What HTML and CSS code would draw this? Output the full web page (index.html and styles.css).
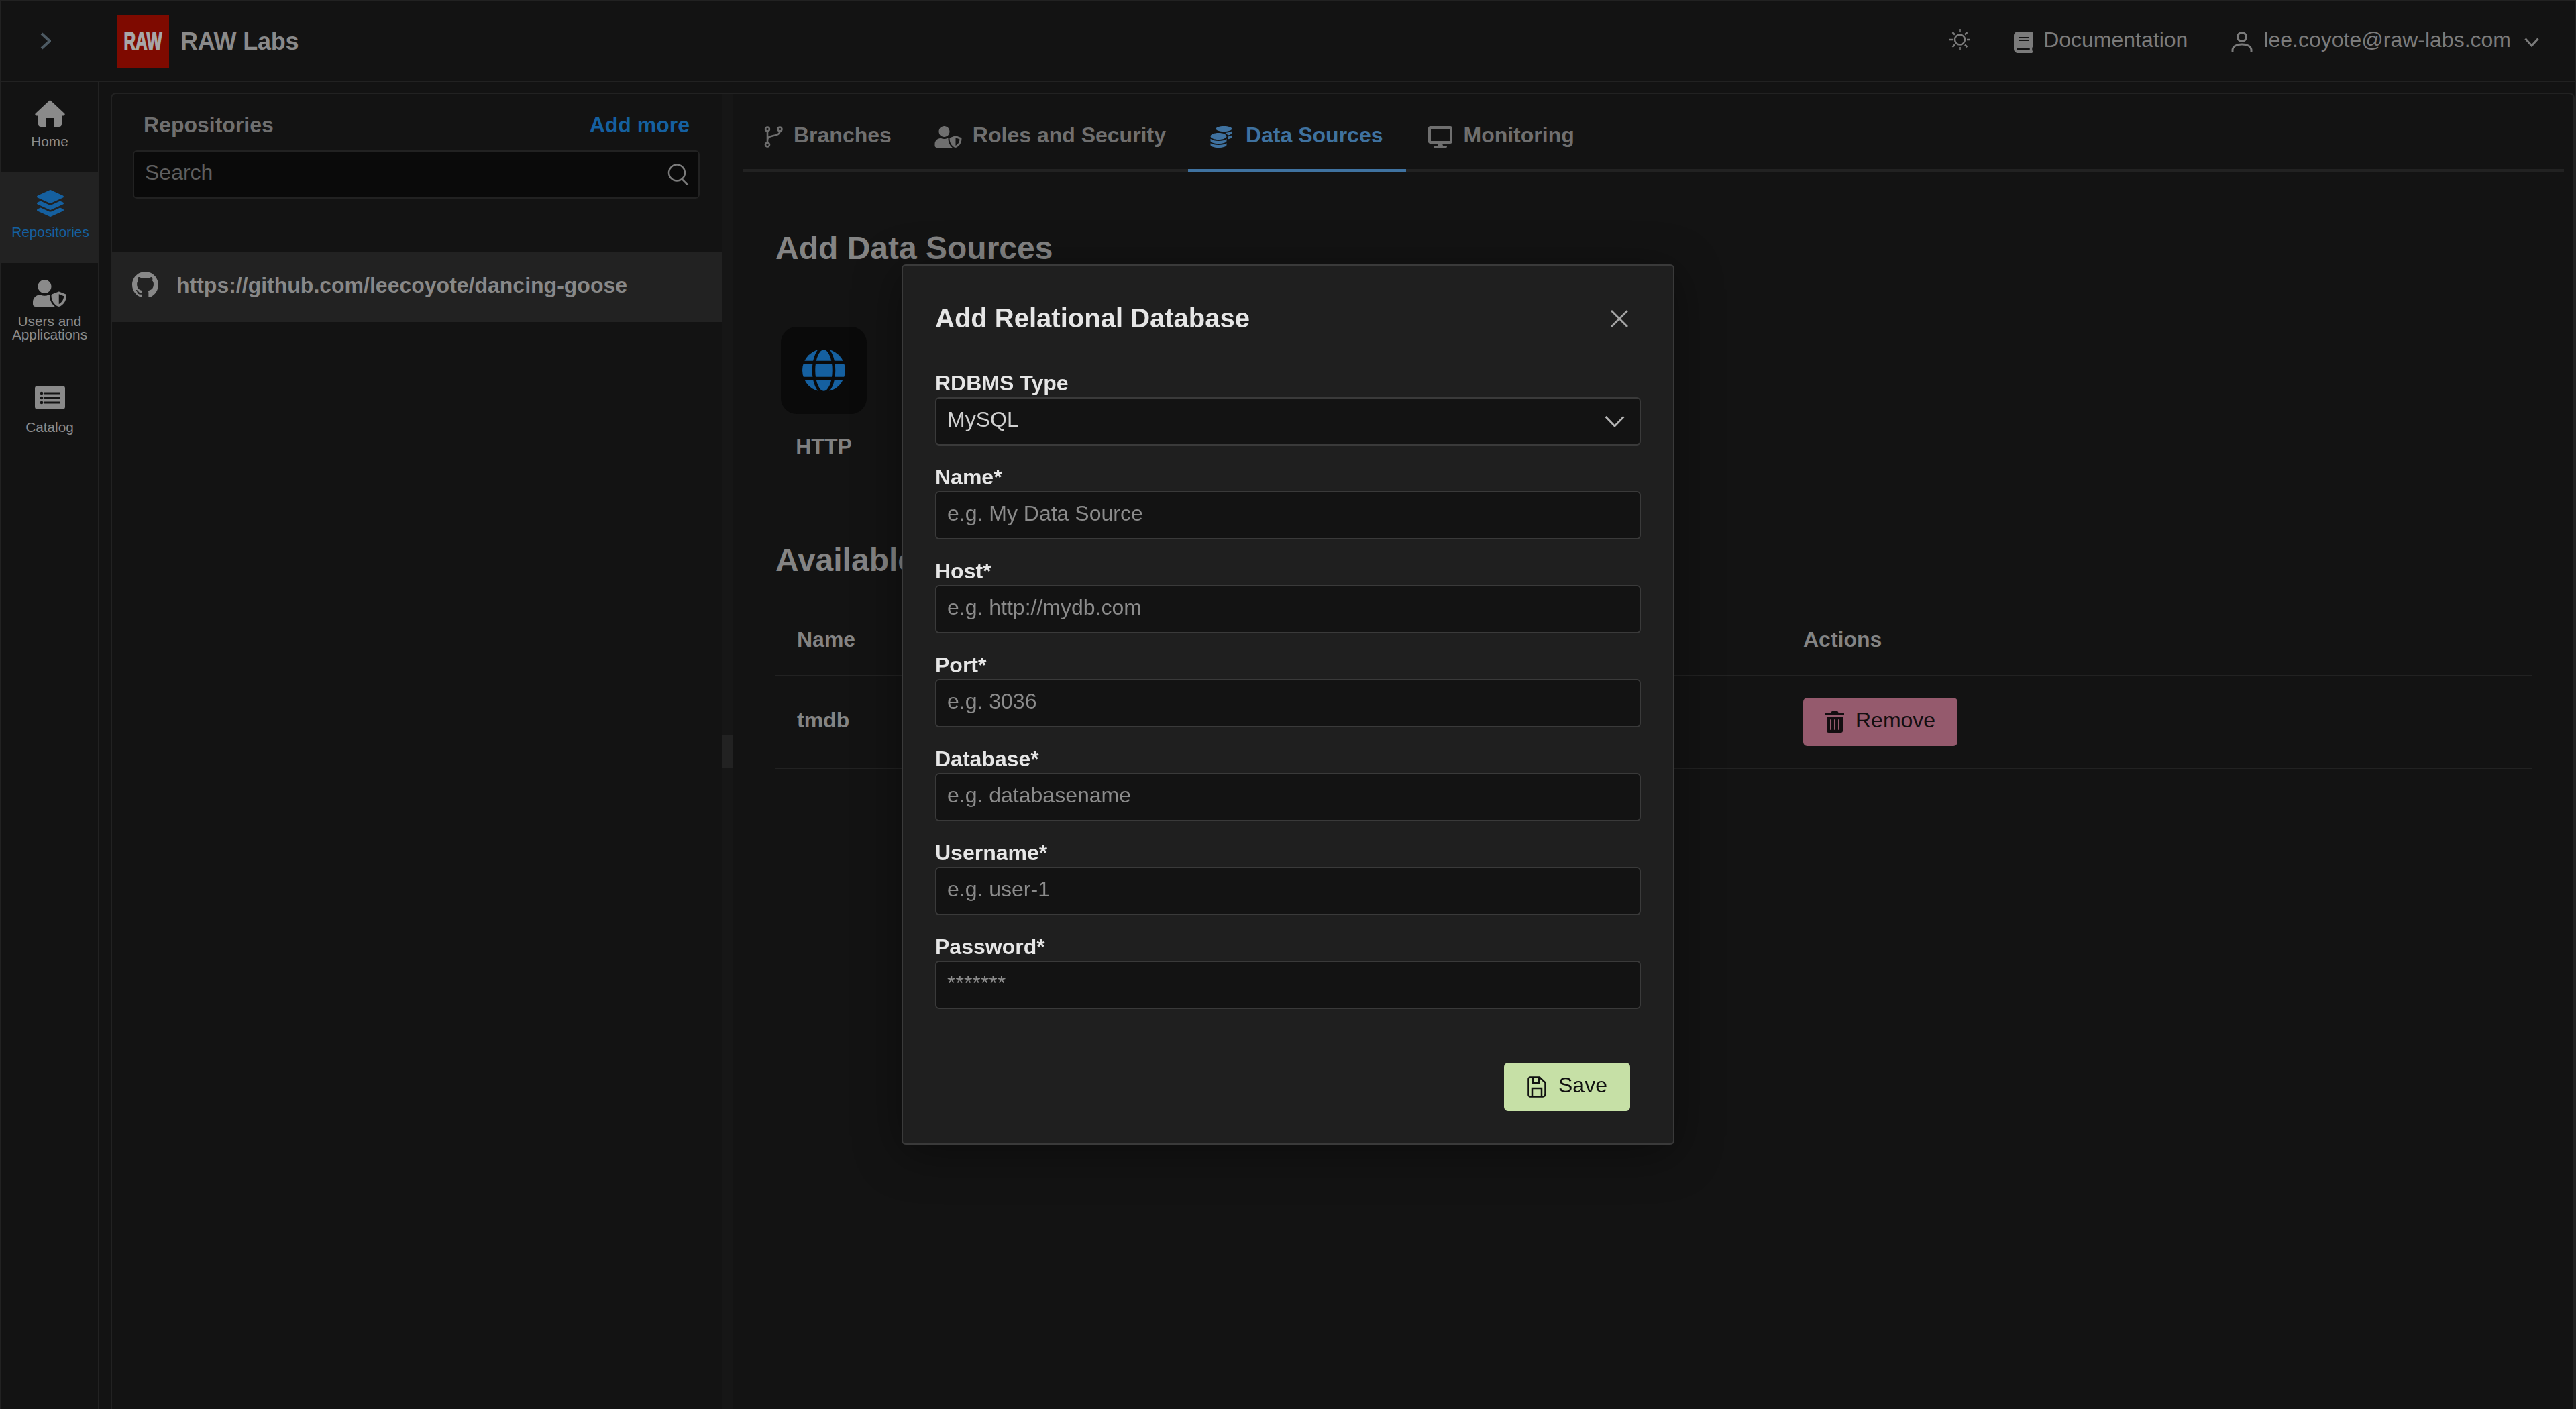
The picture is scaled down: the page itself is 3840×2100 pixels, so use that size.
FILE: index.html
```html
<!DOCTYPE html>
<html lang="en">
<head>
<meta charset="utf-8">
<title>RAW Labs</title>
<link rel="stylesheet" href="styles.css">
</head>
<body>
<svg class="defs" width="0" height="0" aria-hidden="true">
  <symbol id="i-usershield" viewBox="0 0 640 512">
    <path fill="currentColor" d="M622.300 271.100l-115.200-45c-4.100-1.600-12.600-3.700-22.200 0l-115.200 45c-10.700 4.200-17.700 14-17.700 24.900 0 111.600 68.700 188.800 132.900 213.900 9.600 3.700 18 1.600 22.200 0C558.400 489.900 640 420.500 640 296c0-10.900-7-20.700-17.700-24.900zM496 462.400V273.300l95.500 37.300c-5.600 87.100-60.900 135.400-95.500 151.800zM224 256c70.700 0 128-57.300 128-128S294.700 0 224 0 96 57.300 96 128s57.300 128 128 128zm96 40c0-2.500.8-4.800 1.100-7.200-2.500-.1-4.900-.8-7.500-.8h-16.700c-22.200 10.200-46.900 16-72.900 16s-50.600-5.800-72.900-16h-16.700C60.200 288 0 348.200 0 422.400V464c0 26.500 21.500 48 48 48h352c6.800 0 13.300-1.500 19.100-4-54-42.900-99.100-116.700-99.100-212z"/>
  </symbol>
</svg>
<div class="app">
  <header class="topbar">
    <div class="toggle">
      <svg class="chev-right" viewBox="0 0 16 26"><path d="M2 2l12 11L2 24"/></svg>
    </div>
    <div class="logo"><span class="logo-text">RAW</span></div>
    <div class="brand">RAW Labs</div>
    <div class="top-actions">
      <svg class="i-sun" viewBox="0 0 33 32"><circle cx="16.500" cy="16" r="7.500"/><path d="M16.500 0v5M16.500 27v5M1 16h5M27 16h5M5.500 5l3.500 3.500M24 23.500l3.500 3.500M27.500 5L24 8.500M9 23.500L5.500 27"/></svg>
      <svg class="i-book" viewBox="0 0 448 512"><path d="M448 360V24c0-13.300-10.700-24-24-24H96C43 0 0 43 0 96v320c0 53 43 96 96 96h328c13.300 0 24-10.700 24-24v-16c0-7.500-3.500-14.300-8.900-18.700-4.200-15.400-4.200-59.300 0-74.700 5.400-4.300 8.900-11.100 8.900-18.600zM128 134c0-3.300 2.700-6 6-6h212c3.300 0 6 2.700 6 6v20c0 3.300-2.700 6-6 6H134c-3.300 0-6-2.700-6-6v-20zm0 64c0-3.300 2.700-6 6-6h212c3.300 0 6 2.700 6 6v20c0 3.300-2.700 6-6 6H134c-3.300 0-6-2.700-6-6v-20zm253.400 250H96c-17.700 0-32-14.300-32-32 0-17.600 14.400-32 32-32h285.400c-1.900 17.100-1.900 46.900 0 64z"/></svg>
      <span class="top-link">Documentation</span>
      <svg class="i-user" viewBox="0 0 32 31"><circle cx="16" cy="8" r="6.500"/><path d="M2 31v-3c0-6 6-9 14-9s14 3 14 9v3"/></svg>
      <span class="top-link email">lee.coyote@raw-labs.com</span>
      <svg class="i-chev-down" viewBox="0 0 22 14"><path d="M1.500 1.500L11 12l9.500-10.500"/></svg>
    </div>
  </header>

  <div class="workspace">
    <nav class="sidebar">
      <a class="nav-item">
        <svg class="nav-icon i-home" viewBox="0 0 45 40"><path d="M22.500 0L44 20c1.500 1.500.5 3.500-1.500 3.500H40V36c0 2.500-1.500 4-4 4h-7V27H17v13H9c-2.500 0-4-1.500-4-4V23.500H2.500C.5 23.500-.5 21.500 1 20Z"/></svg>
        <span>Home</span>
      </a>
      <a class="nav-item active">
        <svg class="nav-icon i-layers" viewBox="0 0 512 512"><path d="M12.410 148.020l232.940 105.670c6.800 3.090 14.490 3.090 21.290 0l232.940-105.670c16.550-7.510 16.550-32.520 0-40.030L266.650 2.310a25.607 25.607 0 0 0-21.290 0L12.410 107.980c-16.550 7.510-16.550 32.530 0 40.040zm487.180 88.280l-58.090-26.330-161.640 73.270c-7.560 3.430-15.590 5.170-23.860 5.170s-16.290-1.740-23.860-5.170L70.510 209.970l-58.100 26.330c-16.550 7.500-16.550 32.500 0 40l232.940 105.590c6.800 3.080 14.490 3.080 21.290 0L499.590 276.300c16.550-7.500 16.550-32.500 0-40zm0 127.800l-57.870-26.230-161.860 73.370c-7.560 3.430-15.590 5.170-23.860 5.170s-16.290-1.740-23.860-5.170L70.290 337.870 12.410 364.100c-16.550 7.500-16.550 32.500 0 40l232.940 105.590c6.800 3.080 14.490 3.080 21.290 0L499.590 404.100c16.550-7.500 16.550-32.500 0-40z"/></svg>
        <span>Repositories</span>
      </a>
      <a class="nav-item">
        <svg class="nav-icon i-wide"><use href="#i-usershield"/></svg>
        <span>Users and<br>Applications</span>
      </a>
      <a class="nav-item">
        <svg class="nav-icon i-catalog" viewBox="0 0 45 35"><rect width="45" height="35" rx="4" fill="currentColor"/><path fill="#131313" d="M14 9.500h23v3H14zM14 16.500h23v3H14zM14 23.500h23v3H14z"/><circle cx="10" cy="11" r="2.300" fill="#131313"/><circle cx="10" cy="18" r="2.300" fill="#131313"/><circle cx="10" cy="25" r="2.300" fill="#131313"/></svg>
        <span>Catalog</span>
      </a>
    </nav>

    <main class="panel">
      <section class="repos">
        <div class="repos-head">
          <span class="repos-title">Repositories</span>
          <span class="add-more">Add more</span>
        </div>
        <div class="search">
          <input class="search-input" type="text" placeholder="Search">
          <svg class="i-search" viewBox="0 0 32 32"><circle cx="14" cy="13.500" r="12"/><path d="M21.500 23l9 9"/></svg>
        </div>
        <div class="repo-row">
          <svg class="i-github" viewBox="0 0 16 16"><path d="M8 0C3.580 0 0 3.580 0 8c0 3.540 2.290 6.530 5.470 7.590.4.070.55-.17.55-.38 0-.19-.01-.82-.01-1.490-2.010.37-2.530-.49-2.690-.94-.09-.23-.48-.94-.82-1.130-.28-.15-.68-.52-.01-.53.63-.01 1.080.58 1.230.82.720 1.210 1.870.87 2.330.66.070-.52.280-.87.510-1.070-1.780-.2-3.640-.89-3.640-3.950 0-.87.310-1.590.820-2.150-.08-.2-.36-1.020.08-2.120 0 0 .67-.21 2.200.82.640-.18 1.320-.27 2-.27.680 0 1.360.09 2 .27 1.530-1.040 2.200-.82 2.200-.82.440 1.100.160 1.920.080 2.120.510.560.820 1.270.820 2.150 0 3.070-1.870 3.750-3.650 3.950.290.250.540.730.540 1.480 0 1.070-.01 1.930-.01 2.200 0 .21.150.46.550.38A8.013 8.013 0 0 0 16 8c0-4.420-3.580-8-8-8Z"/></svg>
          <span>https://github.com/leecoyote/dancing-goose</span>
        </div>
      </section>

      <div class="splitter"><div class="handle"></div></div>

      <section class="detail">
        <div class="tabs">
          <div class="tab">
            <svg class="tab-icon i-branch" viewBox="0 0 28 32"><circle cx="5" cy="4.500" r="3"/><circle cx="23.500" cy="4.500" r="3"/><circle cx="5" cy="27.500" r="3"/><path d="M5 7.500v17M23.500 7.500c0 9-18.500 4-18.500 13"/></svg>
            <span class="tab-label">Branches</span>
          </div>
          <div class="tab">
            <svg class="tab-icon i-roles"><use href="#i-usershield"/></svg>
            <span class="tab-label">Roles and Security</span>
          </div>
          <div class="tab selected">
            <svg class="tab-icon i-coins" viewBox="0 0 512 512"><path d="M0 405.300V448c0 35.300 86 64 192 64s192-28.700 192-64v-42.700C342.700 434.400 267.200 448 192 448S41.300 434.400 0 405.300zM320 128c106 0 192-28.700 192-64S426 0 320 0 128 28.700 128 64s86 64 192 64zM0 300.400V352c0 35.300 86 64 192 64s192-28.700 192-64v-51.600c-41.300 34-116.900 51.600-192 51.600S41.300 334.400 0 300.400zm416 11c57.300-11.100 96-31.700 96-55.400v-42.700c-23.200 16.400-57.300 27.600-96 34.500v63.600zM192 160C86 160 0 195.800 0 240s86 80 192 80 192-35.800 192-80-86-80-192-80zm219.300 56.300c60-10.800 100.700-32 100.700-56.300v-42.700c-35.500 25.100-96.500 38.600-160.700 41.800 29.500 14.300 51.200 33.500 60 57.200z"/></svg>
            <span class="tab-label">Data Sources</span>
          </div>
          <div class="tab">
            <svg class="tab-icon i-monitor" viewBox="0 0 576 512"><path d="M528 0H48C21.500 0 0 21.500 0 48v320c0 26.500 21.500 48 48 48h192l-16 48h-72c-13.300 0-24 10.700-24 24s10.700 24 24 24h272c13.300 0 24-10.700 24-24s-10.700-24-24-24h-72l-16-48h192c26.500 0 48-21.500 48-48V48c0-26.500-21.500-48-48-48zm-16 352H64V64h448v288z"/></svg>
            <span class="tab-label">Monitoring</span>
          </div>
        </div>

        <div class="detail-body">
          <h2 class="section-title first">Add Data Sources</h2>
          <div class="source">
            <div class="source-card">
              <svg class="i-globe" viewBox="0 0 66 66"><circle cx="33" cy="33" r="32"/><ellipse class="cut" cx="33" cy="33" rx="15" ry="33"/><path class="cut" d="M0 21h66M0 45h66"/></svg>
            </div>
            <div class="source-name">HTTP</div>
          </div>
          <h2 class="section-title second">Available Data Sources</h2>
          <div class="table">
            <div class="t-row t-head">
              <span class="t-name">Name</span>
              <span class="t-actions">Actions</span>
            </div>
            <div class="t-row t-body">
              <span class="t-name strong">tmdb</span>
              <button class="btn btn-remove" type="button">
                <svg class="i-trash" viewBox="0 0 448 512"><path d="M32 464a48 48 0 0 0 48 48h288a48 48 0 0 0 48-48V128H32zm272-256a16 16 0 0 1 32 0v224a16 16 0 0 1-32 0zm-96 0a16 16 0 0 1 32 0v224a16 16 0 0 1-32 0zm-96 0a16 16 0 0 1 32 0v224a16 16 0 0 1-32 0zM432 32H312l-9.400-18.700A24 24 0 0 0 281.100 0H166.800a23.720 23.720 0 0 0-21.400 13.300L136 32H16A16 16 0 0 0 0 48v32a16 16 0 0 0 16 16h416a16 16 0 0 0 16-16V48a16 16 0 0 0-16-16z"/></svg>
                <span class="btn-label">Remove</span>
              </button>
            </div>
          </div>
        </div>
      </section>
    </main>
  </div>
</div>

<div class="overlay">
  <form class="modal">
    <div class="modal-head">
      <h3 class="modal-title">Add Relational Database</h3>
      <svg class="i-close" viewBox="0 0 26 26"><path d="M1 1l24 24M25 1L1 25"/></svg>
    </div>
    <div class="field">
      <label class="field-label">RDBMS Type</label>
      <div class="select">
        <span class="select-value">MySQL</span>
        <svg class="i-select" viewBox="0 0 30 18"><path d="M1.500 2L15 16 28.500 2"/></svg>
      </div>
    </div>
    <div class="field">
      <label class="field-label">Name*</label>
      <input class="input" type="text" placeholder="e.g. My Data Source">
    </div>
    <div class="field">
      <label class="field-label">Host*</label>
      <input class="input" type="text" placeholder="e.g. http://mydb.com">
    </div>
    <div class="field">
      <label class="field-label">Port*</label>
      <input class="input" type="text" placeholder="e.g. 3036">
    </div>
    <div class="field">
      <label class="field-label">Database*</label>
      <input class="input" type="text" placeholder="e.g. databasename">
    </div>
    <div class="field">
      <label class="field-label">Username*</label>
      <input class="input" type="text" placeholder="e.g. user-1">
    </div>
    <div class="field">
      <label class="field-label">Password*</label>
      <input class="input" type="text" placeholder="*******">
    </div>
    <div class="modal-foot">
      <button class="btn btn-save" type="button">
        <svg class="i-save" viewBox="0 0 28 32"><path d="M4 1.500h14l8.500 8V27a3.500 3.500 0 0 1-3.500 3.500H4A3 3 0 0 1 1.500 27V4A3 3 0 0 1 4 1.500Z"/><path d="M8 2v8h9V2M7 30V18h14v12"/></svg>
        <span class="btn-label">Save</span>
      </button>
    </div>
  </form>
</div>
</body>
</html>
```

FILE: styles.css
```css
* { box-sizing: border-box; }
html, body { margin: 0; height: 100%; }
body {
  background: #131313;
  color: #8a8a8a;
  font-family: "Liberation Sans", Arial, sans-serif;
  font-size: 32px;
  overflow: hidden;
}
.defs { position: absolute; }

.app {
  height: 100vh;
  display: flex;
  flex-direction: column;
  border: 2px solid #222;
  border-bottom: 0;
}

/* top bar */
.topbar {
  height: 120px;
  flex: none;
  display: flex;
  align-items: center;
  border-bottom: 2px solid #222;
}
.toggle { width: 172px; flex: none; padding-left: 58px; display: flex; }
.chev-right { width: 16px; height: 26px; fill: none; stroke: #4d5a63; stroke-width: 4; }
.logo {
  width: 78px;
  height: 78px;
  margin-top: 2px;
  background: #7e0a00;
  display: flex;
  align-items: center;
  justify-content: center;
}
.logo-text {
  color: #a8a8a8;
  font-size: 36px;
  font-weight: 700;
  -webkit-text-stroke: 1.500px #a8a8a8;
  transform: scaleX(.68);
}
.brand { margin: 2px 0 0 17px; font-size: 36px; font-weight: 700; color: #8a8a8a; letter-spacing: -.2px; }
.top-actions {
  margin-left: auto;
  padding-right: 53px;
  display: flex;
  align-items: center;
  color: #7b7b7b;
}
.top-link { padding-bottom: 4px; }
.i-sun { width: 33px; height: 32px; margin-right: 64px; margin-top: -4px; fill: none; stroke: #7b7b7b; stroke-width: 2.500; }
.i-book { width: 28px; height: 32px; margin-right: 16px; margin-top: 4px; fill: #7b7b7b; }
.i-user { width: 32px; height: 31px; margin-left: 65px; margin-right: 16px; margin-top: 2px; fill: none; stroke: #7b7b7b; stroke-width: 3; }
.i-chev-down { width: 22px; height: 14px; margin-left: 20px; margin-top: 4px; fill: none; stroke: #7b7b7b; stroke-width: 3; }

/* workspace */
.workspace { flex: 1; min-height: 0; display: flex; }
.sidebar { width: 146px; flex: none; border-right: 2px solid #222; }
.nav-item {
  display: flex;
  flex-direction: column;
  align-items: center;
  min-height: 134px;
  padding-top: 27px;
  font-size: 20.800px;
  line-height: 20px;
  text-align: center;
  color: #8a8a8a;
}
.nav-item.active { width: 146px; min-height: 136px; background: #222; color: #1560a0; }
.nav-item:nth-child(3) { min-height: 156px; padding-top: 25px; }
.nav-icon { flex: none; width: 45px; height: 40px; margin-bottom: 12px; fill: currentColor; }
.active .nav-icon { margin-bottom: 13px; }
.i-wide { width: 50px; }
.i-catalog { height: 35px; margin-bottom: 17px; }
.i-layers { width: 40px; }

/* panel */
.panel {
  flex: 1;
  min-width: 0;
  margin: 16px 0 0 17px;
  display: flex;
  border: 2px solid #222;
  border-bottom: 0;
  border-radius: 8px 8px 0 0;
}
.repos { width: 909px; flex: none; }
.repos-head {
  display: flex;
  justify-content: space-between;
  padding: 27px 48px 0 47px;
  line-height: 38px;
  font-weight: 700;
}
.repos-title { color: #6f6f6f; }
.add-more { color: #1560a0; }
.search {
  width: 845px;
  height: 72px;
  margin: 19px 0 0 31px;
  display: flex;
  align-items: center;
  padding-right: 14px;
  background: #0a0a0a;
  border: 2px solid #222;
  border-radius: 6px;
}
.search-input {
  flex: 1;
  min-width: 0;
  padding: 0 0 6px 16px;
  background: none;
  border: 0;
  outline: 0;
  font: inherit;
  color: #8a8a8a;
}
.search-input::placeholder { color: #5f5f5f; opacity: 1; }
.i-search { width: 32px; height: 32px; fill: none; stroke: #7b7b7b; stroke-width: 2.500; }
.repo-row {
  height: 104px;
  margin-top: 80px;
  padding: 0 0 0 30px;
  display: flex;
  align-items: center;
  gap: 27px;
  background: #222;
  font-weight: 700;
  color: #888;
}
.repo-row span { padding-bottom: 6px; }
.i-github { width: 39px; height: 39px; margin-bottom: 8px; fill: #888; }

.splitter { width: 16px; flex: none; background: #161616; padding-top: 956px; }
.handle { height: 48px; background: #222; }

.detail { flex: 1; min-width: 0; padding: 0 14px 0 16px; }
.tabs { height: 116px; display: flex; border-bottom: 4px solid #222; }
.tab {
  height: 116px;
  padding: 16px 33px 0;
  display: flex;
  align-items: center;
  gap: 16px;
  font-weight: 700;
  color: #6f6f6f;
  border-bottom: 4px solid transparent;
}
.tab:first-child { margin-left: -2px; padding-right: 31px; }
.tab.selected { color: #3f72a0; border-bottom-color: #3f72a0; gap: 20px; padding-right: 35px; }
.tab-label { padding-bottom: 6px; }
.tab-icon { flex: none; height: 32px; fill: currentColor; }
.i-branch { width: 28px; fill: none; stroke: currentColor; stroke-width: 2.600; }
.i-roles { width: 41px; }
.i-coins { width: 33px; }
.i-monitor { width: 36px; }

.detail-body { padding: 0 48px; }
.section-title { margin: 0; font-size: 48px; line-height: 56px; font-weight: 700; color: #848484; }
.section-title.first { margin-top: 86px; }
.section-title.second { margin-top: 123px; white-space: nowrap; }
.source { width: 128px; margin: 89px 0 0 8px; }
.source-card {
  width: 128px;
  height: 130px;
  display: flex;
  align-items: center;
  justify-content: center;
  background: #0a0a0a;
  border-radius: 24px;
}
.i-globe { width: 66px; height: 66px; fill: #1560a0; }
.i-globe .cut { fill: none; stroke: #0a0a0a; stroke-width: 4.500; }
.source-name { margin-top: 29px; line-height: 38px; text-align: center; font-weight: 700; color: #808080; }

.t-row { display: flex; border-bottom: 2px solid #222; font-weight: 700; color: #848484; }
.t-name { width: 1532px; padding-left: 32px; flex: none; }
.t-head { padding: 71px 0 34px; line-height: 38px; }
.t-body { height: 138px; align-items: center; }
.strong { padding-bottom: 6px; }

/* buttons */
.btn {
  height: 72px;
  display: flex;
  align-items: center;
  border: 0;
  border-radius: 6px;
  font: inherit;
  font-weight: 400;
}
.btn-label { padding-bottom: 6px; }
.btn-remove { width: 230px; padding: 0 0 0 33px; gap: 17px; background: #955a6d; color: #130e10; }
.i-trash { width: 28px; height: 32px; fill: #130e10; }
.btn-save { width: 188px; padding: 0 0 0 35px; gap: 18px; background: #c6e0a6; color: #111; }
.i-save { width: 28px; height: 32px; fill: none; stroke: #111; stroke-width: 2.500; }

/* modal */
.overlay {
  position: fixed;
  inset: 0;
  display: flex;
  align-items: center;
  justify-content: center;
}
.modal {
  width: 1152px;
  height: 1312px;
  padding: 54px 48px 48px;
  background: #1f1f1f;
  border: 2px solid #3a3a3a;
  border-radius: 6px;
  box-shadow: 0 12px 70px rgba(0, 0, 0, .4);
}
.modal-head { display: flex; align-items: center; justify-content: space-between; padding-right: 19px; margin-bottom: 54px; }
.modal-title { margin: 0; font-size: 40px; line-height: 48px; font-weight: 700; color: #e6e6e6; }
.i-close { width: 26px; height: 26px; margin-top: 2px; fill: none; stroke: #a5a5a5; stroke-width: 2.800; }
.field { margin-bottom: 28px; }
.field-label { display: block; margin-bottom: 2px; line-height: 38px; font-weight: 700; color: #e6e6e6; }
.input, .select {
  display: block;
  width: 100%;
  height: 72px;
  padding: 0 16px 6px;
  background: #131313;
  border: 2px solid #3a3a3a;
  border-radius: 6px;
  outline: 0;
  font: inherit;
  color: #c8c8c8;
}
.input::placeholder { color: #8b8b8b; opacity: 1; }
.select { display: flex; align-items: center; justify-content: space-between; padding-right: 22px; color: #d0d0d0; }
.i-select { width: 30px; height: 18px; margin-top: 6px; fill: none; stroke: #b5b5b5; stroke-width: 2.800; }
.modal-foot { display: flex; justify-content: flex-end; padding: 52px 16px 0 0; }
```
